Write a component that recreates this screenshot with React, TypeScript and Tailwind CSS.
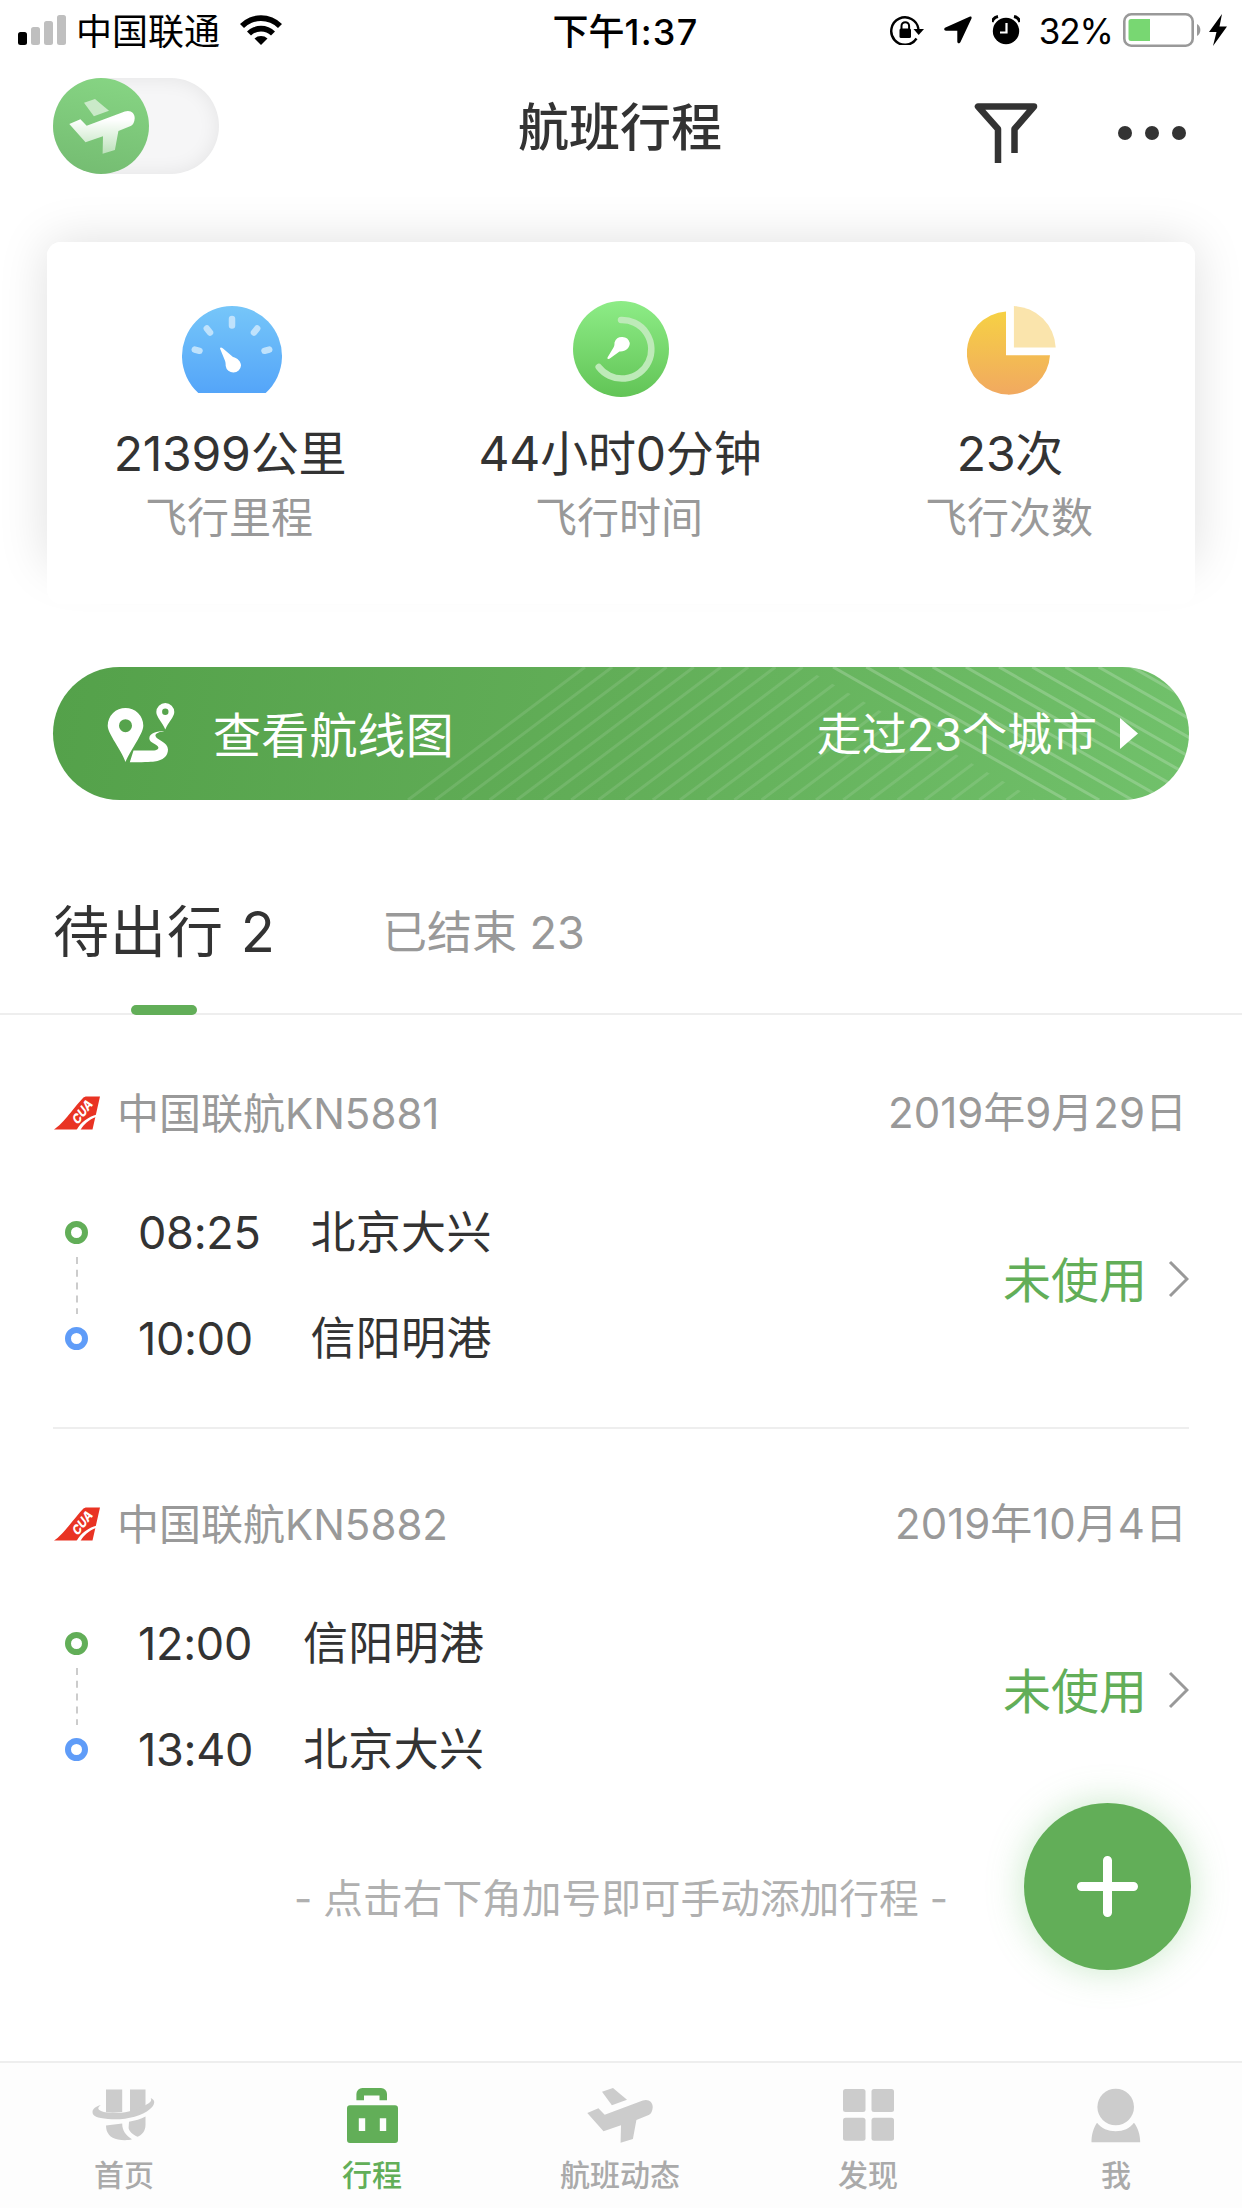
import React from 'react'

const PLANE_WING = 'M31 24.7 42 21 56 32.7 40.9 38.3Z'
const PLANE_BODY =
  'M16.3 46 27.4 41.3 33.7 47.7 71.8 33.4C77.5 31.5 82 35 81.7 40.3C81.5 44.5 80 47 77.7 48L65.4 53 61.9 72 49.6 75.7 50 58.3 32.5 64.3Z'

const StatusBar: React.FC = () => (
  <div className="flex h-[60px] items-center justify-between pr-[15px] pl-[18px] text-black">
    <div className="flex w-[420px] items-center">
      <svg width="48" height="30" viewBox="0 0 48 30">
        <rect x="0" y="17" width="9" height="13" rx="2.5" />
        <rect x="13" y="12" width="9" height="18" rx="2.5" fill="#bfbfbf" />
        <rect x="26" y="6" width="9" height="24" rx="2.5" fill="#bfbfbf" />
        <rect x="39" y="0" width="9" height="30" rx="2.5" fill="#bfbfbf" />
      </svg>
      <span className="mt-[3px] ml-[10px] text-[36px] leading-none">中国联通</span>
      <svg className="ml-5" width="42" height="30" viewBox="0 0 42 30">
        <path d="M0 9A29.5 29.5 0 0 1 42 9L38 13A24 24 0 0 0 4 13Z" />
        <path d="M7 16.5A20 20 0 0 1 35 16.5L31 20.5A14.5 14.5 0 0 0 11 20.5Z" />
        <path d="M14.5 23.5A10 10 0 0 1 27.5 23.5L21 30Z" />
      </svg>
    </div>
    <span className="mt-[3px] ml-[6px] text-[36px] leading-none font-medium">
      下午<span className="tracking-[1.3px]">1:37</span>
    </span>
    <div className="flex w-[420px] items-center justify-end">
      <svg width="36" height="30" viewBox="0 0 36 30">
        <path
          d="M26.5 23.5A13.7 13.7 0 1 1 28.5 14"
          fill="none"
          stroke="#000"
          strokeWidth="2.4"
        />
        <path d="M23.5 14H34L28.7 20Z" />
        <rect x="9.5" y="13.5" width="11.5" height="9.5" rx="1.5" />
        <path d="M11.5 14V11a3.8 3.8 0 0 1 7.6 0V14" fill="none" stroke="#000" strokeWidth="2" />
      </svg>
      <svg className="ml-[18px]" width="28" height="28" viewBox="0 0 28 28">
        <path d="M25.5 .8C27 0 28 .8 27.5 2.5L16.5 26C15.5 28 13.3 27.5 13.3 25.5V14.7H2C0 14.7-.5 12.5 1.5 11.5Z" />
      </svg>
      <svg className="ml-5" width="28" height="30" viewBox="0 0 28 30">
        <circle cx="14" cy="16" r="13.2" />
        <path d="M0 7A8 8 0 0 1 6 1.5M28 7A8 8 0 0 0 22 1.5" stroke="#000" strokeWidth="3" />
        <path d="M14.5 8V17.5H8" fill="none" stroke="#fff" strokeWidth="2.2" />
      </svg>
      <span className="mt-[2px] ml-[19px] text-[35px] leading-none tracking-[-1px]">32%</span>
      <svg className="ml-[10px]" width="79" height="34" viewBox="0 0 79 34">
        <rect
          x="1.3"
          y="1.3"
          width="68.4"
          height="31.4"
          rx="7"
          fill="none"
          stroke="#999"
          strokeWidth="2.6"
        />
        <path d="M8 6H27V28H8A2.5 2.5 0 0 1 5.5 25.5V8.5A2.5 2.5 0 0 1 8 6Z" fill="#78d772" />
        <path d="M74 11A7 7 0 0 1 74 23Z" fill="#999" />
      </svg>
      <svg className="ml-[7px]" width="18" height="32" viewBox="0 0 18 32">
        <path d="M13 0 0 18H7.5L4 32 18 12.5H10.5Z" />
      </svg>
    </div>
  </div>
)

const Header: React.FC = () => (
  <header className="flex h-[182px] items-start justify-between pr-[53px] pl-[53px]">
    <div className="mt-[18px] flex w-[300px]">
      <div className="h-24 w-[166px] rounded-full bg-[#f6f6f7] shadow-[inset_0_0_20px_rgba(0,0,0,0.08)]">
        <svg width="96" height="96" viewBox="0 0 96 96">
          <defs>
            <linearGradient id="knob" x1="0.6" y1="0" x2="0.4" y2="1">
              <stop offset="0" stopColor="#86d483" />
              <stop offset="1" stopColor="#75bd72" />
            </linearGradient>
            <linearGradient id="plane" x1="0" y1="0" x2="0" y2="1">
              <stop offset="0.2" stopColor="#fff" />
              <stop offset="1" stopColor="#fff" stopOpacity="0.5" />
            </linearGradient>
          </defs>
          <circle cx="48" cy="48" r="48" fill="url(#knob)" />
          <path d={PLANE_WING} fill="#fff" fillOpacity="0.58" />
          <path d={PLANE_BODY} fill="url(#plane)" />
        </svg>
      </div>
    </div>
    <h1 className="mt-[41px] mr-[2px] text-[51px] leading-[54px] font-medium">航班行程</h1>
    <div className="mt-[43px] flex w-[300px] justify-end">
      <svg width="64" height="62" viewBox="0 0 64 62">
        <path
          d="M24 60V26L4 3.5H60L40.5 26V50"
          fill="none"
          stroke="#333"
          strokeWidth="6.5"
          strokeLinejoin="round"
        />
      </svg>
      <div className="mt-[23px] mr-[3px] ml-[80px] flex gap-[13px]">
        <span className="size-[14px] rounded-full bg-[#333]" />
        <span className="size-[14px] rounded-full bg-[#333]" />
        <span className="size-[14px] rounded-full bg-[#333]" />
      </div>
    </div>
  </header>
)

const GaugeIcon: React.FC = () => (
  <svg width="100" height="88" viewBox="0 0 100 88">
    <defs>
      <linearGradient id="gauge" x1="0" y1="0" x2="0" y2="1">
        <stop offset="0" stopColor="#76c6f9" />
        <stop offset="1" stopColor="#54a5f9" />
      </linearGradient>
    </defs>
    <path d="M16.3 87A50 50 0 1 1 83.7 87Z" fill="url(#gauge)" />
    <path
      d="M50 13V19.5M24.8 22.5 28 26.5M75.2 22.5 72 26.5M12.8 43.6 17.5 44.8M87.2 43.6 82.5 44.8"
      stroke="#bfe2fc"
      strokeWidth="6.5"
      strokeLinecap="round"
    />
    <path
      d="M38 42.5C38.3 41 39.5 41.3 41 42.6L51 51C55.5 52 59 55.5 59 59.5A7.7 7.7 0 0 1 43.7 60C43.7 57 43.5 55.5 42.5 53.5Z"
      fill="#fff"
    />
  </svg>
)

const ClockIcon: React.FC = () => (
  <svg width="96" height="96" viewBox="0 0 96 96">
    <defs>
      <linearGradient id="clock" x1="0" y1="0" x2="0" y2="1">
        <stop offset="0" stopColor="#8dec86" />
        <stop offset="1" stopColor="#62c456" />
      </linearGradient>
    </defs>
    <circle cx="48" cy="48" r="48" fill="url(#clock)" />
    <path
      d="M48 19A29.3 29.3 0 1 1 25.7 66"
      fill="none"
      stroke="#bdeab8"
      strokeWidth="6.5"
      strokeLinecap="round"
    />
    <path
      d="M34.5 56.5C34.2 58.5 36 58.3 37.5 57L46.5 50.5C52.5 51 56.8 47 56.8 42A8 8 0 0 0 41.5 41.5C41.5 44 41.3 45 40.5 46.5Z"
      fill="#fff"
    />
  </svg>
)

const PieIcon: React.FC = () => (
  <svg width="89" height="89" viewBox="0 0 89 89">
    <defs>
      <linearGradient id="pie" x1="0" y1="0" x2="0" y2="1">
        <stop offset="0" stopColor="#f6d144" />
        <stop offset="1" stopColor="#f1a960" />
      </linearGradient>
    </defs>
    <path d="M39 5.5A41.6 41.6 0 1 0 83 49.2H39Z" fill="url(#pie)" />
    <path d="M46.9 0V41.5H88.7A43.5 43.5 0 0 0 46.9 0Z" fill="#fae4ac" />
  </svg>
)

const STATS = [
  { icon: <GaugeIcon />, pad: 'mt-[5px] ml-[3px]', value: '21399公里', label: '飞行里程' },
  { icon: <ClockIcon />, pad: 'ml-[2px]', value: '44小时0分钟', label: '飞行时间' },
  { icon: <PieIcon />, pad: 'mt-[5px] ml-[2px]', value: '23次', label: '飞行次数' },
]

const Stats: React.FC = () => (
  <section className="mx-[47px] h-[325px] rounded-[14px] shadow-[0_0_50px_rgba(0,0,0,0.13)]">
    <div className="flex h-[362px] justify-center rounded-[14px] bg-white pt-[59px] pr-[2px]">
      {STATS.map((s) => (
        <div key={s.label} className="flex w-[390px] shrink-0 flex-col items-center">
          <div className="flex h-[125px] items-start">
            <div className={s.pad}>{s.icon}</div>
          </div>
          <div className="text-[48px] leading-[56px] tracking-[-0.2px]">{s.value}</div>
          <div className="mt-[11px] mr-[2px] text-[42px] leading-[50px] text-[#999]">{s.label}</div>
        </div>
      ))}
    </div>
  </section>
)

const RouteBanner: React.FC = () => (
  <section className="relative mx-[53px] mt-[100px] flex h-[133px] items-center overflow-hidden rounded-full bg-linear-[100deg,#54a14a,#62ae58_50%,#71c16b] pr-[51px] pl-[54px] text-white">
    <svg className="absolute inset-0" width="1136" height="133" viewBox="0 0 1136 133">
      <defs>
        <clipPath id="stripes">
          <path d="M0 0H750L983 133H0Z" />
        </clipPath>
      </defs>
      <g clipPath="url(#stripes)" stroke="#fff" strokeOpacity="0.11" strokeWidth="3">
        {Array.from({ length: 24 }, (_, i) => (
          <line key={i} x1={355 + i * 27.2} y1="133" x2={532 + i * 27.2} y2="0" />
        ))}
      </g>
      <g stroke="#fff" strokeOpacity="0.2" strokeWidth="3">
        {Array.from({ length: 11 }, (_, i) => (
          <line key={i} x1={780 + i * 33.2} y1="0" x2={1013 + i * 33.2} y2="133" />
        ))}
      </g>
    </svg>
    <svg width="70" height="62" viewBox="0 0 70 62" fill="#fff">
      <path
        fillRule="evenodd"
        d="M18.5 5A17.8 17.8 0 0 1 36.3 22.5C36.3 31 24 46 18.5 59C14 46 .7 31 .7 22.5A17.8 17.8 0 0 1 18.5 5ZM18.5 16.2A6.5 6.5 0 1 0 18.5 29.2 6.5 6.5 0 1 0 18.5 16.2Z"
      />
      <path
        fillRule="evenodd"
        d="M58.3 0A9 9 0 0 1 67.3 9C67.3 14 61 19.5 58.3 26.5C55.5 19.5 49.3 14 49.3 9A9 9 0 0 1 58.3 0ZM58.3 5.6A3.2 3.2 0 1 0 58.3 12 3.2 3.2 0 1 0 58.3 5.6Z"
      />
      <path d="M57.4 28C50 28 42.3 30 42.3 35.5C42.3 40 51.4 41.5 51.4 44.5C51.4 47.5 47 47.6 42 47.6H26.5L22.8 59.3C34 59.3 44 59 47.5 58.5C56 57.5 61 53 61 46.5C61 39 49.5 37 48.5 33C48 30.5 52 29 57.4 28Z" />
    </svg>
    <span className="relative mt-[5px] ml-[36px] text-[48px] leading-none tracking-[0.2px]">
      查看航线图
    </span>
    <span className="relative mt-[2px] ml-auto text-[45px] leading-none">走过23个城市</span>
    <svg className="relative ml-[23px]" width="18" height="31" viewBox="0 0 18 31" fill="#fff">
      <path d="M0 0 18 15.5 0 31Z" />
    </svg>
  </section>
)

const Tabs: React.FC = () => (
  <nav className="mt-[80px] flex h-[135px] border-b-2 border-[#eee] pl-[53px]">
    <div className="relative text-[56px] leading-[105px] tracking-[1px]">
      待出行 2
      <i className="absolute bottom-[-2px] left-[78px] h-[10px] w-[66px] rounded-full bg-[#62ae58]" />
    </div>
    <div className="ml-[106px] text-[45px] leading-[106px] text-[#999]">已结束 23</div>
  </nav>
)

interface Flight {
  no: string
  date: string
  from: [string, string]
  to: [string, string]
}

const FLIGHTS: Flight[] = [
  {
    no: '中国联航KN5881',
    date: '2019年9月29日',
    from: ['08:25', '北京大兴'],
    to: ['10:00', '信阳明港'],
  },
  {
    no: '中国联航KN5882',
    date: '2019年10月4日',
    from: ['12:00', '信阳明港'],
    to: ['13:40', '北京大兴'],
  },
]

const AirlineLogo: React.FC = () => (
  <svg className="overflow-visible" width="46" height="34" viewBox="0 0 46 34">
    <path d="M0 33.5C9 28 22 9 29 2C30 1 31 .5 33 .5H46L38.5 33.5Z" fill="#e93323" />
    <path d="M22.5 34C27 26 34 21 43 18.5L42 21C35 23.5 30 28 26.5 34Z" fill="#fff" />
    <text
      transform="translate(23.5 29.5) rotate(-53) skewX(-14)"
      fill="#fff"
      fontSize="12.5"
      fontWeight="800"
      fontFamily="Inter"
      textLength="26"
      lengthAdjust="spacingAndGlyphs"
    >
      CUA
    </text>
  </svg>
)

const FlightCard: React.FC<{ flight: Flight }> = ({ flight }) => (
  <article className="mx-[53px] h-[411px] border-b-2 border-[#eee] last:border-0">
    <div className="flex items-center pt-[68px] pl-[1px] text-[42px] leading-[52px] text-[#999]">
      <AirlineLogo />
      <span className="mt-[2px] ml-[17px]">{flight.no}</span>
      <span className="mr-[2px] ml-auto">{flight.date}</span>
    </div>
    <div className="mt-[38px] flex items-center pl-3">
      <div className="flex flex-col items-center">
        <i className="size-[23px] rounded-full border-[6px] border-[#62ae58]" />
        <svg className="my-[13px]" width="2" height="57" viewBox="0 0 2 57">
          <path d="M1 0V57" stroke="#ccc" strokeWidth="2" strokeDasharray="7 5.8" />
        </svg>
        <i className="size-[23px] rounded-full border-[6px] border-[#5f9cf8]" />
      </div>
      <div className="mt-[2px] ml-[50px] grid grid-cols-[auto_auto] gap-x-[50px] text-[45px] leading-[106px]">
        <span className="tracking-[-0.3px]">{flight.from[0]}</span>
        <span className="tracking-[0.3px]">{flight.from[1]}</span>
        <span className="tracking-[-0.3px]">{flight.to[0]}</span>
        <span className="tracking-[0.3px]">{flight.to[1]}</span>
      </div>
      <span className="mt-[-8px] ml-auto text-[48px] leading-none text-[#62ae58]">未使用</span>
      <svg className="mt-[-12px] ml-[21px]" width="21" height="38" viewBox="0 0 21 38">
        <path d="M2 2 19 19 2 36" fill="none" stroke="#999" strokeWidth="3" />
      </svg>
    </div>
  </article>
)

const NAV = [
  {
    label: '首页',
    icon: (
      <svg width="64" height="52" viewBox="0 0 64 52">
        <path d="M14 .5H30.2V23C24 23.7 19 24 14 23.2ZM38 .5H53.5V17C49 20 44 21.5 38 22.5Z" />
        <path d="M8.8 16.3C5.5 18 5.5 20.5 9 22C19 26 38 24 50 18C57 14.5 60.5 12.5 58.7 9C64 11 63 16 58 20C49 28 31 31.5 16 30C5 29 .5 27 .5 23C.5 20 4 17 8.8 16.3Z" />
        <path d="M14 36.5 30.2 34.5C30.2 42 34 46.5 40 50.3C36 51.5 30 51.2 26 50.6C18 49 14 44 14 36.5ZM37 32.7C43 31.7 49 30 53.5 27.5V36C53.5 42 50 46 45.6 47.7C41 46 37 42.5 36.6 39Z" />
      </svg>
    ),
  },
  {
    label: '行程',
    active: true,
    icon: (
      <svg width="51" height="55" viewBox="0 0 51 55">
        <path d="M9.4 12.3V6A6 6 0 0 1 15.4 0H34A6 6 0 0 1 40 6V12.3H32.5V7.5H17V12.3Z" />
        <path
          fillRule="evenodd"
          d="M3 17.3H48A3 3 0 0 1 51 20.3V52A3 3 0 0 1 48 55H3A3 3 0 0 1 0 52V20.3A3 3 0 0 1 3 17.3ZM11.8 30.3V43H18.2V30.3ZM32.8 30.3V43H39.2V30.3Z"
        />
      </svg>
    ),
  },
  {
    label: '航班动态',
    icon: (
      <svg width="66" height="55" viewBox="16 21 66 55">
        <path d={PLANE_WING} />
        <path d={PLANE_BODY} />
      </svg>
    ),
  },
  {
    label: '发现',
    icon: (
      <svg width="51" height="52" viewBox="0 0 51 52">
        <rect width="22.5" height="23" rx="2.5" />
        <rect x="28.5" width="22.5" height="23" rx="2.5" />
        <rect y="28.7" width="22.5" height="23" rx="2.5" />
        <rect x="28.5" y="28.7" width="22.5" height="23" rx="2.5" />
      </svg>
    ),
  },
  {
    label: '我',
    icon: (
      <svg width="50" height="55" viewBox="0 0 50 55">
        <circle cx="24.7" cy="19" r="18.3" />
        <path d="M.5 54.3C.3 47 2.5 40 6 34.7C10.5 40.5 17 43.2 24.7 43.2C32.5 43.2 38.5 40.5 43 34.7C47 40 49.2 47 49.2 54.3Z" />
      </svg>
    ),
  },
]

const App: React.FC = () => {
  return (
    <div className="relative flex h-[2208px] w-[1242px] flex-col overflow-hidden bg-white font-['Inter','Noto_Sans_CJK_SC',sans-serif] text-[#333]">
      <StatusBar />
      <Header />
      <Stats />
      <RouteBanner />
      <Tabs />
      <main className="mt-[3px]">
        {FLIGHTS.map((f) => (
          <FlightCard key={f.no} flight={f} />
        ))}
      </main>
      <p className="mt-[33px] text-center text-[39.7px] leading-[52px] text-[#b0b0b0]">
        - 点击右下角加号即可手动添加行程 -
      </p>

      <button className="absolute top-[1803px] right-[51px] flex size-[167px] items-center justify-center rounded-full bg-[#62ae58] shadow-[0_0_36px_rgba(98,190,98,0.35)]">
        <svg width="61" height="61" viewBox="0 0 61 61">
          <path d="M30.5 4.5V56.5M4.5 30.5H56.5" stroke="#fff" strokeWidth="9" strokeLinecap="round" />
        </svg>
      </button>

      <footer className="mt-auto flex h-[147px] border-t-2 border-[#eee] bg-[#fdfdfd] pr-[2px]">
        {NAV.map((n) => (
          <div
            key={n.label}
            className={
              n.active
                ? 'flex flex-1 flex-col items-center fill-[#62ae58] pt-[21px] text-[#62ae58]'
                : 'flex flex-1 flex-col items-center fill-[#ccc] pt-[21px] text-[#aaa]'
            }
          >
            <div className="flex h-[62px] items-center">{n.icon}</div>
            <span className="mt-[9px] text-[30px] leading-[40px] font-medium">{n.label}</span>
          </div>
        ))}
      </footer>
    </div>
  )
}

export default App
